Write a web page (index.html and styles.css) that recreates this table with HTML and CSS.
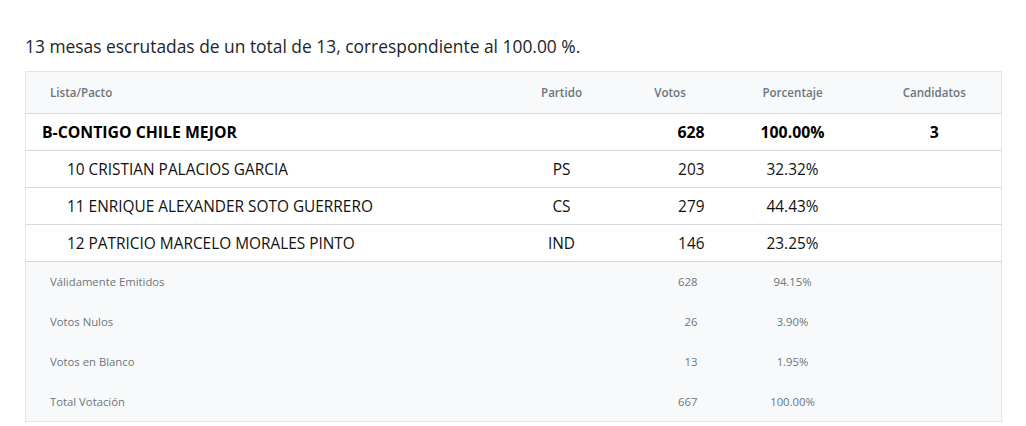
FILE: index.html
```html
<!DOCTYPE html>
<html lang="es">
<head>
<meta charset="utf-8">
<title>Resultados</title>
<link rel="stylesheet" href="styles.css">
</head>
<body>
<div class="page">
  <p class="summary">13 mesas escrutadas de un total de 13, correspondiente al 100.00 %.</p>
  <table class="results">
    <colgroup>
      <col class="c-name"><col class="c-party"><col class="c-votes"><col class="c-pct"><col class="c-cand">
    </colgroup>
    <thead>
      <tr>
        <th class="h-name">Lista/Pacto</th>
        <th>Partido</th>
        <th>Votos</th>
        <th>Porcentaje</th>
        <th>Candidatos</th>
      </tr>
    </thead>
    <tbody>
      <tr class="pact">
        <td class="name">B-CONTIGO CHILE MEJOR</td>
        <td class="party"></td>
        <td class="votes">628</td>
        <td class="pct">100.00%</td>
        <td class="cand">3</td>
      </tr>
      <tr class="candidate">
        <td class="name">10 CRISTIAN PALACIOS GARCIA</td>
        <td class="party">PS</td>
        <td class="votes">203</td>
        <td class="pct">32.32%</td>
        <td class="cand"></td>
      </tr>
      <tr class="candidate">
        <td class="name">11 ENRIQUE ALEXANDER SOTO GUERRERO</td>
        <td class="party">CS</td>
        <td class="votes">279</td>
        <td class="pct">44.43%</td>
        <td class="cand"></td>
      </tr>
      <tr class="candidate">
        <td class="name">12 PATRICIO MARCELO MORALES PINTO</td>
        <td class="party">IND</td>
        <td class="votes">146</td>
        <td class="pct">23.25%</td>
        <td class="cand"></td>
      </tr>
    </tbody>
    <tfoot>
      <tr>
        <td class="name">Válidamente Emitidos</td>
        <td></td>
        <td class="votes">628</td>
        <td class="pct">94.15%</td>
        <td></td>
      </tr>
      <tr>
        <td class="name">Votos Nulos</td>
        <td></td>
        <td class="votes">26</td>
        <td class="pct">3.90%</td>
        <td></td>
      </tr>
      <tr>
        <td class="name">Votos en Blanco</td>
        <td></td>
        <td class="votes">13</td>
        <td class="pct">1.95%</td>
        <td></td>
      </tr>
      <tr>
        <td class="name">Total Votación</td>
        <td></td>
        <td class="votes">667</td>
        <td class="pct">100.00%</td>
        <td></td>
      </tr>
    </tfoot>
  </table>
</div>
</body>
</html>
```
FILE: styles.css
```css
html, body {
  margin: 0;
  padding: 0;
  background: #ffffff;
}

body {
  font-family: "Open Sans", "Noto Sans", "DejaVu Sans", sans-serif;
  color: #212529;
}

.page {
  padding: 34px 25px 0 25px;
  width: 976px;
}

.summary {
  margin: 0 0 13px 0;
  font-size: 17.4px;
  line-height: 24px;
  color: #212529;
}

.results {
  width: 976px;
  border-collapse: collapse;
  table-layout: fixed;
  border: 1px solid #e3e5e8;
}

.c-name { width: 475px; }
.c-party { width: 122px; }
.c-votes { width: 95px; }
.c-pct { width: 150px; }
.c-cand { width: 134px; }

.results thead tr {
  background: #f8f9fa;
  height: 42px;
  border-bottom: 1px solid #d6d8db;
}

.results th {
  font-size: 11.6px;
  font-weight: 600;
  color: #6c757d;
  text-align: center;
  padding: 0;
}

.results th.h-name {
  text-align: left;
  padding-left: 24px;
}

.results tbody tr {
  height: 37px;
  border-bottom: 1px solid #d6d8db;
}

.results tbody td {
  font-size: 15.4px;
  color: #111;
  padding: 0;
}

.results tbody td.name {
  padding-left: 41px;
}

.results tbody .pact td {
  font-size: 15.8px;
  font-weight: 700;
  color: #000;
}

.results tbody .pact td.name {
  padding-left: 16px;
}

.results td.party,
.results td.pct,
.results td.cand {
  text-align: center;
}

.results td.votes {
  text-align: right;
  padding-right: 13px;
}

.results tfoot tr {
  background: #f8f9fa;
  height: 40px;
}

.results tfoot td {
  font-size: 11.3px;
  color: #6c757d;
  padding: 0;
}

.results tfoot td.name {
  padding-left: 24px;
}

.results tfoot td.votes {
  padding-right: 20px;
}
```
